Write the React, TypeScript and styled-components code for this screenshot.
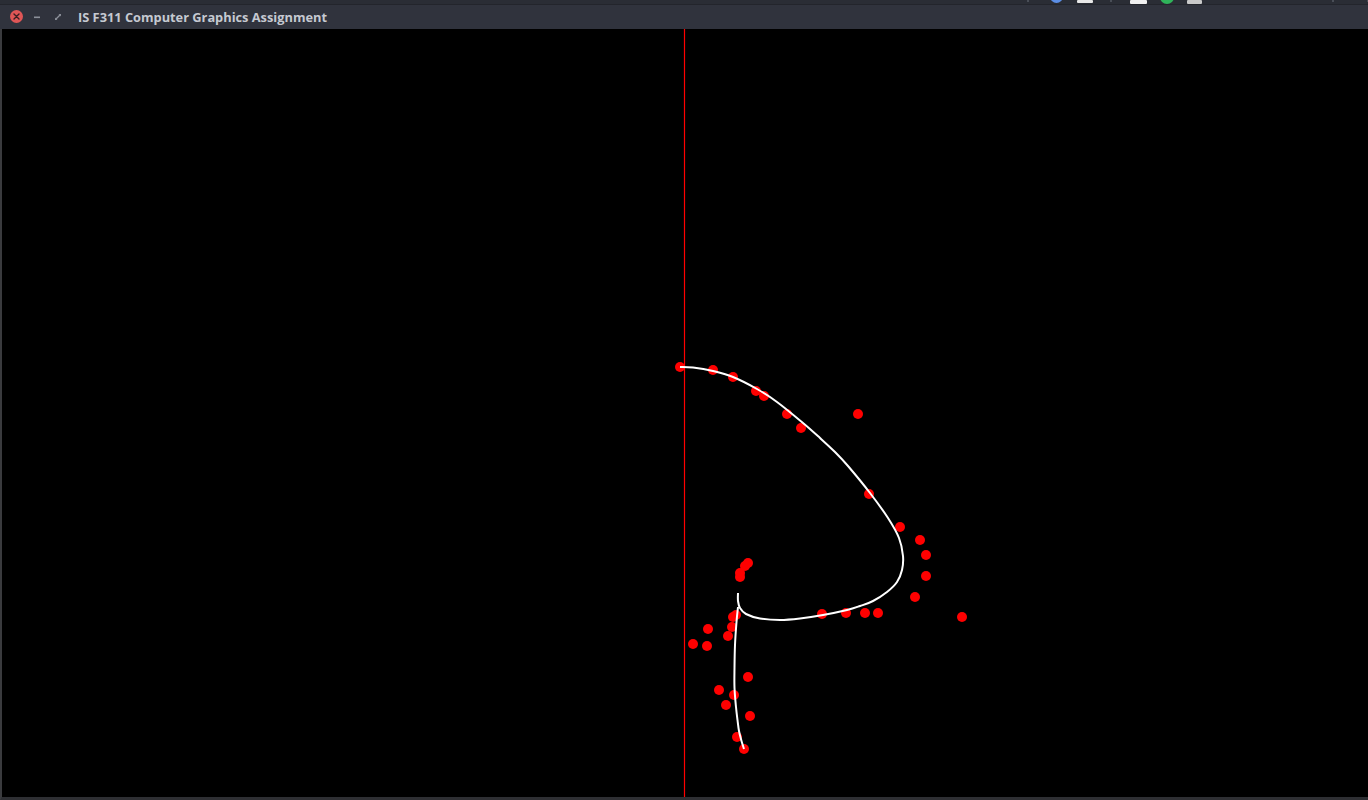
import React from "react";
import styled, { createGlobalStyle } from "styled-components";

const Global = createGlobalStyle`
  html, body { margin: 0; padding: 0; background: #000; overflow: hidden; }
  #root { width: 1368px; height: 800px; }
`;

const Window = styled.div`
  width: 1368px;
  height: 800px;
  display: flex;
  flex-direction: column;
  background: #000;
`;

const TopStrip = styled.div`
  height: 4px;
  background: #2a2d35;
  border-bottom: 1px solid #23252c;
  display: flex;
  align-items: flex-start;
  padding-left: 1027px;
  overflow: hidden;
`;

const TrayItem = styled.div<{ $w: number; $h: number; $color: string; $round?: boolean; $ml: number; $mt?: number }>`
  flex: none;
  width: ${(p) => p.$w}px;
  height: ${(p) => p.$h}px;
  margin-left: ${(p) => p.$ml}px;
  margin-top: ${(p) => p.$mt ?? 0}px;
  background: ${(p) => p.$color};
  border-radius: ${(p) => (p.$round ? "50%" : "1px")};
`;

const TitleBar = styled.div`
  height: 24px;
  background: #30333d;
  display: flex;
  align-items: center;
  padding-left: 10px;
`;

const CloseBtn = styled.div`
  width: 13px;
  height: 13px;
  border-radius: 50%;
  background: #df5656;
  display: flex;
  align-items: center;
  justify-content: center;
  margin-top: -1px;
`;

const SmallBtn = styled.div<{ $ml: number }>`
  width: 8px;
  height: 8px;
  margin-left: ${(p) => p.$ml}px;
  display: flex;
  align-items: center;
  justify-content: center;
`;

const Title = styled.div`
  margin-left: 16px;
  font-family: "Open Sans", "DejaVu Sans", sans-serif;
  font-weight: 700;
  font-size: 12.8px;
  color: #c5c9d1;
  white-space: nowrap;
  margin-top: -1px;
`;

const Canvas = styled.div`
  flex: 1;
  border-left: 2px solid #3a3b3e;
  border-bottom: 3px solid #2e2f33;
  background: #000;
  position: relative;
  overflow: hidden;
`;

const Drawing = styled.svg`
  display: block;
  width: 100%;
  height: 100%;
`;

type P = [number, number];

function catmull(points: P[]): string {
  let d = `M ${points[0][0]} ${points[0][1]}`;
  for (let i = 0; i < points.length - 1; i++) {
    const p0 = points[i - 1] || points[i];
    const p1 = points[i];
    const p2 = points[i + 1];
    const p3 = points[i + 2] || p2;
    const c1x = p1[0] + (p2[0] - p0[0]) / 6;
    const c1y = p1[1] + (p2[1] - p0[1]) / 6;
    const c2x = p2[0] - (p3[0] - p1[0]) / 6;
    const c2y = p2[1] - (p3[1] - p1[1]) / 6;
    d += ` C ${c1x} ${c1y} ${c2x} ${c2y} ${p2[0]} ${p2[1]}`;
  }
  return d;
}

const curve1: P[] = [
  [680, 367], [693, 367.5], [713, 371], [733, 377], [757, 389], [777, 402], [803, 423],
  [820, 438], [835, 452], [848, 466], [870, 493], [888, 518], [899, 538], [903, 556], [902, 570],
  [897, 582], [887, 592], [873, 601], [860, 606], [847, 610], [823, 615], [800, 618.5],
  [780, 620], [760, 618.5], [746, 614], [740, 608], [738, 601], [738, 593],
];

const curve2: P[] = [
  [738, 607], [736.5, 622], [735, 645], [734.5, 668], [734.5, 688], [736, 707],
  [737.5, 720], [739, 731], [741.5, 741], [744, 749],
];

const dots: P[] = [
  [680, 367], [713, 370], [733, 377], [756, 391], [764, 396], [787, 414], [801, 428], [858, 414],
  [869, 494], [900, 527], [920, 540], [926, 555], [926, 576], [915, 597], [962, 617],
  [878, 613], [865, 613], [846, 613], [822, 614],
  [748, 563], [745, 566], [740, 573], [740, 577],
  [736, 615], [733, 617], [732, 627], [728, 636], [708, 629], [693, 644], [707, 646],
  [748, 677], [719, 690], [734, 695], [726, 705], [750, 716], [737, 737], [744, 749],
];

export default function App() {
  return (
    <>
      <Global />
      <Window>
        <TopStrip>
          <TrayItem $w={2} $h={2} $color="#555a63" $ml={0} />
          <TrayItem $w={13} $h={13} $color="#5b8ee6" $round $ml={21} $mt={-10} />
          <TrayItem $w={16} $h={3} $color="#e8e8e8" $ml={14} />
          <TrayItem $w={2} $h={2} $color="#555a63" $ml={17} />
          <TrayItem $w={17} $h={4} $color="#f0f0f0" $ml={18} />
          <TrayItem $w={14} $h={14} $color="#2fb35a" $round $ml={13} $mt={-10} />
          <TrayItem $w={15} $h={4} $color="#c9c9c9" $ml={13} />
          <TrayItem $w={2} $h={2} $color="#555a63" $ml={130} />
          <TrayItem $w={2} $h={2} $color="#555a63" $ml={33} />
        </TopStrip>
        <TitleBar>
          <CloseBtn>
            <svg width="7" height="7" viewBox="0 0 7 7">
              <path d="M1 1 L6 6 M6 1 L1 6" stroke="#3a1f22" strokeWidth="1.4" strokeLinecap="round" />
            </svg>
          </CloseBtn>
          <SmallBtn $ml={10}>
            <svg width="8" height="8" viewBox="0 0 8 8">
              <rect x="1" y="3.5" width="6" height="1.6" fill="#8b9099" />
            </svg>
          </SmallBtn>
          <SmallBtn $ml={13}>
            <svg width="8" height="8" viewBox="0 0 8 8">
              <path d="M4.5 1 H7 V3.5 Z M3.5 7 H1 V4.5 Z" fill="#8b9099" />
              <path d="M6 2 L2 6" stroke="#8b9099" strokeWidth="1.2" />
            </svg>
          </SmallBtn>
          <Title>IS F311 Computer Graphics Assignment</Title>
        </TitleBar>
        <Canvas>
          <Drawing viewBox="2 29 1366 768" preserveAspectRatio="none">
            <line x1={684.5} y1={29} x2={684.5} y2={797} stroke="#ff0000" strokeWidth={1.2} />
            {dots.map(([x, y], i) => (
              <circle key={i} cx={x} cy={y} r={5} fill="#ff0000" />
            ))}
            <path d={catmull(curve1)} fill="none" stroke="#ffffff" strokeWidth={2} />
            <path d={catmull(curve2)} fill="none" stroke="#ffffff" strokeWidth={2} />
          </Drawing>
        </Canvas>
      </Window>
    </>
  );
}
